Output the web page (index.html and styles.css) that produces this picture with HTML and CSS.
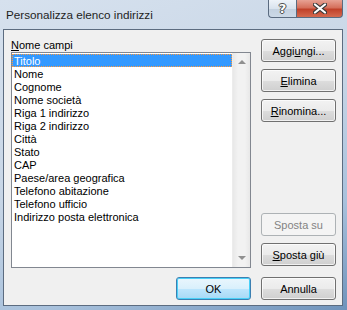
FILE: index.html
```html
<!DOCTYPE html>
<html lang="it">
<head>
    <meta charset="UTF-8">
    <title>Personalizza elenco indirizzi</title>
    <link rel="stylesheet" href="styles.css">
</head>
<body>
    <div class="window">
        <div class="titlebar">
            <div class="title">Personalizza elenco indirizzi</div>
            <div class="caption-btn help">?</div>
            <div class="caption-btn close">
                <svg width="14" height="11" viewBox="0 0 14 11">
                    <path d="M2 1.5 L12 9.5 M12 1.5 L2 9.5" stroke="#3a3a3a" stroke-width="4.2" stroke-linecap="round"/>
                    <path d="M2 1.5 L12 9.5 M12 1.5 L2 9.5" stroke="#fff" stroke-width="2.2" stroke-linecap="round"/>
                </svg>
            </div>
        </div>
        <div class="client">
            <div class="main">
                <div class="fields">
                    <div class="label"><u>N</u>ome campi</div>
                    <div class="listbox">
                        <ul class="items">
                            <li class="selected"><span>Titolo</span></li>
                            <li>Nome</li>
                            <li>Cognome</li>
                            <li>Nome società</li>
                            <li>Riga 1 indirizzo</li>
                            <li>Riga 2 indirizzo</li>
                            <li>Città</li>
                            <li>Stato</li>
                            <li>CAP</li>
                            <li>Paese/area geografica</li>
                            <li>Telefono abitazione</li>
                            <li>Telefono ufficio</li>
                            <li>Indirizzo posta elettronica</li>
                        </ul>
                        <div class="scrollbar">
                            <span class="arrow up"></span>
                            <span class="arrow down"></span>
                        </div>
                    </div>
                </div>
                <div class="side-buttons">
                    <button>Aggi<u>u</u>ngi...</button>
                    <button><u>E</u>limina</button>
                    <button><u>R</u>inomina...</button>
                    <div class="spacer"></div>
                    <button disabled>Sposta su</button>
                    <button><u>S</u>posta giù</button>
                </div>
            </div>
            <div class="footer">
                <button class="default">OK</button>
                <button>Annulla</button>
            </div>
        </div>
    </div>
</body>
</html>
```

FILE: styles.css
```css
body {
    margin: 0;
    font-family: "Liberation Sans", Arial, sans-serif;
    font-size: 11px;
    color: #000;
}
.window {
    width: 347px;
    height: 310px;
    box-sizing: border-box;
    padding: 0 4px 4px 3px;
    display: flex;
    flex-direction: column;
    background: linear-gradient(160deg, #d6e1ee 0%, #c8d6e6 45%, #a8c1dc 75%, #6f93bb 100%);
}
.titlebar {
    height: 29px;
    display: flex;
    align-items: flex-start;
}
.title {
    flex: 1;
    padding: 7px 0 0 3px;
    font-size: 11.7px;
    line-height: 16px;
    color: #1e1e1e;
}
.caption-btn {
    height: 18px;
    box-sizing: border-box;
    border: 1px solid #5a6b80;
    border-top: none;
    display: flex;
    align-items: center;
    justify-content: center;
}
.help {
    width: 28px;
    border-right: none;
    border-radius: 0 0 0 4px;
    background: linear-gradient(#eef3f9 0%, #d9e3ee 50%, #c2d0df 51%, #ccd9e7 100%);
    font-family: "DejaVu Sans", sans-serif;
    font-weight: bold;
    font-size: 13px;
    color: #fff;
    text-shadow: 0 0 1px #333, 1px 0 0 #555, -1px 0 0 #555, 0 1px 0 #555, 0 -1px 0 #555;
}
.close {
    width: 47px;
    border-radius: 0 0 4px 0;
    background: linear-gradient(#e7a294 0%, #d5705c 45%, #c0412a 55%, #d56a4f 100%);
}
.client {
    flex: 1;
    border: 1px solid #5c6c80;
    background: #f0f0f0;
    padding: 8px 6px 5px 7px;
    display: flex;
    flex-direction: column;
}
.main {
    display: flex;
    gap: 10px;
}
.fields {
    width: 241px;
}
.label {
    height: 14px;
    line-height: 14px;
}
.listbox {
    height: 216px;
    box-sizing: border-box;
    border: 1px solid #828790;
    background: #fff;
    display: flex;
}
.items {
    flex: 1;
    list-style: none;
    margin: 0;
    padding: 1px 0 0;
}
.items li {
    height: 13px;
    line-height: 14px;
    padding-left: 2px;
    white-space: nowrap;
}
.items li.selected {
    background: #3399ff;
    color: #fff;
    outline: 1px dotted #ff9a3c;
    outline-offset: -1px;
}
.scrollbar {
    width: 17px;
    background: linear-gradient(90deg, #e8e8e8, #f2f2f2 30%, #f2f2f2 70%, #e8e8e8);
    border-left: 1px solid #ececec;
    display: flex;
    flex-direction: column;
    justify-content: space-between;
    align-items: center;
    padding: 7px 0 7px;
}
.arrow {
    width: 0;
    height: 0;
    border-left: 4px solid transparent;
    border-right: 4px solid transparent;
}
.arrow.up {
    border-bottom: 4px solid #909090;
}
.arrow.down {
    border-top: 4px solid #909090;
}
.side-buttons {
    width: 75px;
    padding: 1px 0 2px;
    display: flex;
    flex-direction: column;
    gap: 7px;
}
.spacer {
    flex: 1;
}
button {
    width: 75px;
    height: 23px;
    padding: 0;
    font-family: inherit;
    font-size: 11px;
    color: #000;
    border: 1px solid #707070;
    border-radius: 3px;
    background: linear-gradient(#f2f2f2 0%, #ebebeb 50%, #dddddd 51%, #cfcfcf 100%);
    box-shadow: inset 0 0 0 1px rgba(255, 255, 255, 0.7);
}
button:disabled {
    border-color: #adb2b5;
    background: #f4f4f4;
    color: #838383;
    box-shadow: none;
}
button.default {
    border-color: #3c7fb1;
    box-shadow: inset 0 0 0 1px #48d0f8;
    background: linear-gradient(#eaf6fd 0%, #d9f0fc 50%, #bee6fd 51%, #a7d9f5 100%);
}
.footer {
    margin-top: auto;
    display: flex;
    justify-content: flex-end;
    gap: 10px;
}
```
